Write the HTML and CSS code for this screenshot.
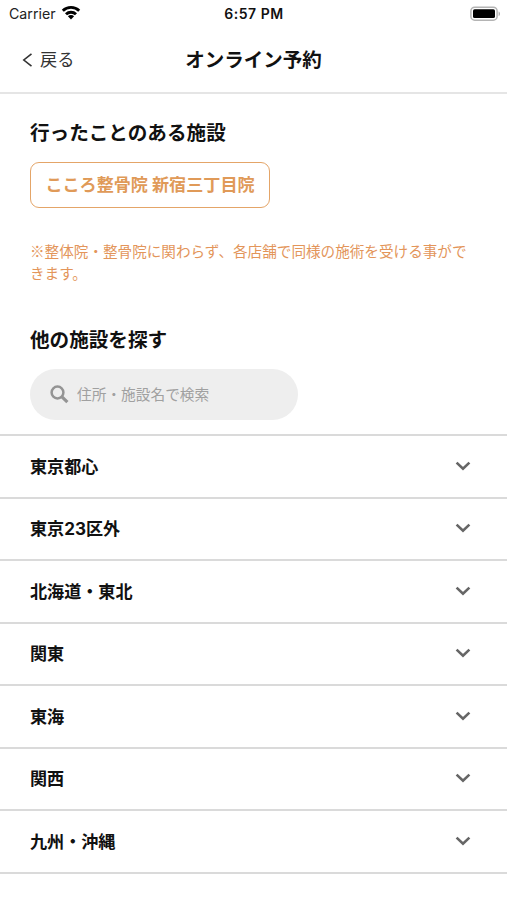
FILE: index.html
```html
<!DOCTYPE html>
<html lang="ja">
<head>
<meta charset="utf-8">
<meta name="viewport" content="width=device-width, initial-scale=1">
<title>オンライン予約</title>
<link rel="stylesheet" href="styles.css">
</head>
<body>
<div class="status">
  <div class="carrier">
    <span>Carrier</span>
    <svg class="wifi" width="20" height="15" viewBox="0 0 20 15" fill="none" stroke="#000" stroke-width="2.9"><path d="M1.8 5.7a11.8 11.8 0 0 1 16.4 0"/><path d="M5 9.2a7.2 7.2 0 0 1 10 0"/><path d="M10 14.4 6.9 11.3a4.4 4.4 0 0 1 6.2 0z" fill="#000" stroke="none"/></svg>
  </div>
  <time class="time">6:57 PM</time>
  <svg class="battery" width="31" height="16" viewBox="0 0 31 16"><rect x=".9" y="1.2" width="26.2" height="13" rx="3.8" fill="#fff" stroke="#b4b4b4" stroke-width="1.5"/><rect x="3" y="3.3" width="22" height="8.8" rx="1.6"/><path d="M28.6 5.4c1.8.7 1.8 3.9 0 4.6z" fill="#aaa"/></svg>
</div>
<header class="nav">
  <a class="back"><svg width="11" height="16" viewBox="0 0 11 16" fill="none" stroke="#333" stroke-width="1.6"><path d="M9.5 1.8 1.8 8l7.7 6.2"/></svg><span>戻る</span></a>
  <h1 class="title">オンライン予約</h1>
</header>
<main>
  <section class="visited">
    <h2 class="heading">行ったことのある施設</h2>
    <button class="facility">こころ整骨院 新宿三丁目院</button>
    <p class="note">※整体院・整骨院に関わらず、各店舗で同様の施術を受ける事ができます。</p>
  </section>
  <section class="search">
    <h2 class="heading">他の施設を探す</h2>
    <div class="field">
      <svg width="19" height="19" viewBox="0 0 19 19" fill="none" stroke="#949494"><circle cx="7.5" cy="7.5" r="5.9" stroke-width="2.5"/><path d="m11.7 11.7 5.7 5.5" stroke-width="3.2"/></svg>
      <span class="placeholder">住所・施設名で検索</span>
    </div>
  </section>
  <ul class="areas">
    <li class="area"><span>東京都心</span><svg class="chevron" viewBox="0 0 16 10"><path d="m1.6 1.6 6.4 6.2 6.4-6.2"/></svg></li>
    <li class="area"><span>東京23区外</span><svg class="chevron" viewBox="0 0 16 10"><path d="m1.6 1.6 6.4 6.2 6.4-6.2"/></svg></li>
    <li class="area"><span>北海道・東北</span><svg class="chevron" viewBox="0 0 16 10"><path d="m1.6 1.6 6.4 6.2 6.4-6.2"/></svg></li>
    <li class="area"><span>関東</span><svg class="chevron" viewBox="0 0 16 10"><path d="m1.6 1.6 6.4 6.2 6.4-6.2"/></svg></li>
    <li class="area"><span>東海</span><svg class="chevron" viewBox="0 0 16 10"><path d="m1.6 1.6 6.4 6.2 6.4-6.2"/></svg></li>
    <li class="area"><span>関西</span><svg class="chevron" viewBox="0 0 16 10"><path d="m1.6 1.6 6.4 6.2 6.4-6.2"/></svg></li>
    <li class="area"><span>九州・沖縄</span><svg class="chevron" viewBox="0 0 16 10"><path d="m1.6 1.6 6.4 6.2 6.4-6.2"/></svg></li>
  </ul>
</main>
</body>
</html>
```
FILE: styles.css
```css
* {
  box-sizing: border-box;
}

body {
  margin: 0;
  min-height: 900px;
  background: #fff;
  color: #111;
  font-family: Inter, "Noto Sans CJK JP", sans-serif;
}

svg {
  display: block;
  flex: none;
}

.status {
  display: grid;
  grid-template-columns: 1fr auto 1fr;
  align-items: center;
  height: 27px;
  padding: 0 6px 0 9px;
  font-size: 14.2px;
}

.carrier {
  display: flex;
  align-items: center;
  gap: 5px;
  color: #222;
}

.wifi {
  margin-top: -3px;
}

.time {
  padding-right: 2px;
  font-size: 14px;
  font-weight: 600;
  letter-spacing: 0.55px;
}

.battery {
  justify-self: end;
}

.nav {
  display: grid;
  grid-template-columns: 1fr auto 1fr;
  align-items: center;
  height: 67px;
  padding: 0 22px;
  border-bottom: 2px solid #e5e5e5;
}

.back {
  display: flex;
  align-items: center;
  gap: 7px;
  color: #333;
  font-size: 17.2px;
  line-height: 24px;
  padding-top: 1px;
}

.title {
  margin: 0;
  font-size: 19.5px;
  font-weight: 700;
  line-height: 28px;
}

.visited,
.search {
  padding: 0 30px;
}

.visited {
  padding-top: 25px;
}

.heading {
  margin: 0;
  font-size: 19.6px;
  font-weight: 700;
  line-height: 29px;
}

.facility {
  display: block;
  width: 240px;
  height: 46px;
  margin: 14px 0 0;
  padding: 0 0 4px;
  border: 1.5px solid #e4a568;
  border-radius: 9px;
  background: #fff;
  color: #e09a58;
  font: inherit;
  font-size: 17.1px;
  font-weight: 700;
  white-space: nowrap;
}

.note {
  margin: 32px 0 0;
  color: #e3955a;
  font-family: "Noto Sans CJK JP", sans-serif;
  font-size: 14.6px;
  line-height: 22px;
}

.search {
  padding-top: 42px;
}

.field {
  display: flex;
  align-items: center;
  gap: 8px;
  width: 268px;
  height: 51px;
  margin-top: 14px;
  padding-left: 20px;
  border-radius: 26px;
  background: #eee;
  color: #a0a0a0;
  font-size: 14.7px;
}

.placeholder {
  padding-bottom: 2px;
}

.areas {
  margin: 14px 0 0;
  padding: 0;
  border-top: 2px solid #dadada;
  list-style: none;
}

.area {
  display: flex;
  align-items: center;
  justify-content: space-between;
  height: 62.5px;
  padding: 0 36px 0 30px;
  border-bottom: 2px solid #dadada;
  font-size: 17.1px;
  font-weight: 700;
}

.area span {
  padding-bottom: 2px;
}

.chevron {
  width: 16px;
  height: 10px;
  margin-bottom: 1px;
  fill: none;
  stroke: #666;
  stroke-width: 2.6;
}
```
